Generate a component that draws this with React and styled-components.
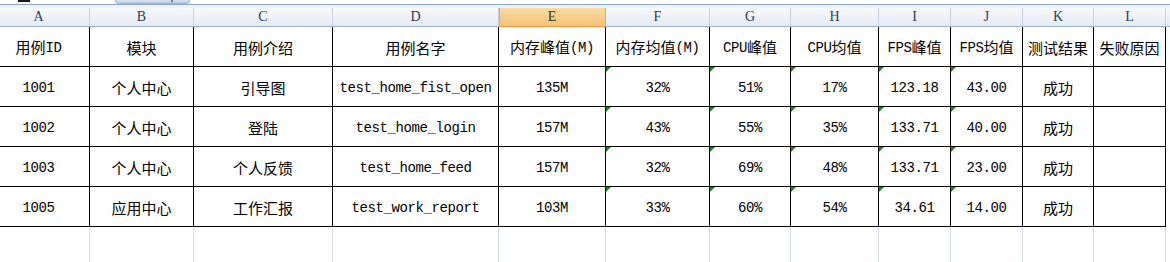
import React from "react";
import styled, { createGlobalStyle, css } from "styled-components";

const Global = createGlobalStyle`
  html, body { margin: 0; padding: 0; background: #ffffff; }
  body { font-family: "Liberation Mono", "Noto Sans CJK SC", monospace; }
  #root { width: 1170px; height: 262px; overflow: hidden; }
`;

const Viewport = styled.div`
  width: 1170px;
  height: 262px;
  overflow: hidden;
  background: #ffffff;
`;

const TopStrip = styled.div`
  height: 4px;
  display: flex;
  align-items: flex-start;
  background: #ffffff;
  border-bottom: 1px solid #8fa9c8;
`;

const Mark = styled.div`
  margin-left: 18px;
  width: 12px;
  height: 2px;
  background: #1a1a1a;
`;

const Tab = styled.div`
  margin-left: 85px;
  width: 75px;
  height: 4px;
  border-radius: 0 0 8px 8px;
  background: linear-gradient(#d6e3f3, #b9cde6);
  border: 1px solid #9db4d2;
  border-top: none;
  box-sizing: border-box;
  display: flex;
  justify-content: flex-end;
  padding-right: 16px;
`;

const TabTick = styled.div`
  width: 2px;
  height: 2px;
  background: #6b7d92;
`;

const Gap = styled.div`
  height: 3px;
  background: #eef2f8;
`;

const COLS = "102px 104px 139px 166px 107px 104px 81px 88px 72px 72px 71px 72px 72px";

const Grid = styled.div`
  display: grid;
  grid-template-columns: ${COLS};
  margin-left: -12px;
`;

const ColHead = styled.div`
  height: 19px;
  box-sizing: border-box;
  display: flex;
  align-items: center;
  justify-content: center;
  font-family: "Liberation Serif", serif;
  font-size: 14px;
  color: #27405a;
  border-right: 1px solid #c3cfdd;
  border-bottom: 1px solid #9db3cd;
  background: linear-gradient(#f7f9fc, #e4eaf2);
  ${(p) =>
    p.$active &&
    css`
      background: linear-gradient(#f9dba4, #f3c276);
      border-right: 1px solid #f2a344;
      border-bottom: 1px solid #f29a3a;
      box-shadow: inset 1px 0 0 #f2a344;
      color: #3a3320;
    `}
`;

const Cell = styled.div`
  position: relative;
  height: 40px;
  box-sizing: border-box;
  display: flex;
  align-items: center;
  justify-content: center;
  white-space: nowrap;
  color: #000000;
  border-right: 1px solid ${(p) => (p.$plain ? "#d4dbe6" : "#000000")};
  border-bottom: 1px solid ${(p) => (p.$plain ? "transparent" : "#000000")};
  ${(p) =>
    p.$flag &&
    css`
      &::before {
        content: "";
        position: absolute;
        left: 0;
        top: 0;
        border-top: 5px solid #138a13;
        border-right: 5px solid transparent;
      }
    `}
`;

const Line = styled.span`
  display: inline-block;
  font-family: "Noto Sans CJK SC", sans-serif;
  font-size: 15px;
  line-height: 16px;
  padding-top: 2px;
`;

const Han = styled.span`
  font-family: "Noto Sans CJK SC", sans-serif;
  font-size: 15px;
  font-weight: 400;
`;

const Lat = styled.span`
  font-family: "Liberation Mono", monospace;
  font-size: 14px;
  letter-spacing: -0.4px;
  vertical-align: 1px;
`;

const Txt = ({ children }) => {
  const parts = String(children).split(/([\u4e00-\u9fff]+)/);
  return (
    <Line>
      {parts.map((p, i) =>
        i % 2 === 1 ? <Han key={i}>{p}</Han> : p ? <Lat key={i}>{p}</Lat> : null
      )}
    </Line>
  );
};

const letters = ["A", "B", "C", "D", "E", "F", "G", "H", "I", "J", "K", "L", ""];

const headers = [
  "用例ID",
  "模块",
  "用例介绍",
  "用例名字",
  "内存峰值(M)",
  "内存均值(M)",
  "CPU峰值",
  "CPU均值",
  "FPS峰值",
  "FPS均值",
  "测试结果",
  "失败原因",
];

const rows = [
  ["1001", "个人中心", "引导图", "test_home_fist_open", "135M", "32%", "51%", "17%", "123.18", "43.00", "成功", ""],
  ["1002", "个人中心", "登陆", "test_home_login", "157M", "43%", "55%", "35%", "133.71", "40.00", "成功", ""],
  ["1003", "个人中心", "个人反馈", "test_home_feed", "157M", "32%", "69%", "48%", "133.71", "23.00", "成功", ""],
  ["1005", "应用中心", "工作汇报", "test_work_report", "103M", "33%", "60%", "54%", "34.61", "14.00", "成功", ""],
];

const flagged = new Set([5, 6, 7, 8, 9]);

export default function App() {
  return (
    <>
      <Global />
      <Viewport>
        <TopStrip>
          <Mark />
          <Tab>
            <TabTick />
          </Tab>
        </TopStrip>
        <Gap />
        <Grid>
          {letters.map((l, i) => (
            <ColHead key={"c" + i} $active={l === "E"}>
              {l}
            </ColHead>
          ))}
          {headers.map((h, i) => (
            <Cell key={"h" + i}>
              <Txt>{h}</Txt>
            </Cell>
          ))}
          <Cell $plain />
          {rows.map((r, ri) => (
            <React.Fragment key={ri}>
              {r.map((v, ci) => (
                <Cell key={ci} $flag={flagged.has(ci)}>
                  {v ? <Txt>{v}</Txt> : null}
                </Cell>
              ))}
              <Cell $plain />
            </React.Fragment>
          ))}
          {letters.map((l, i) => (
            <Cell key={"e" + i} $plain />
          ))}
        </Grid>
      </Viewport>
    </>
  );
}
